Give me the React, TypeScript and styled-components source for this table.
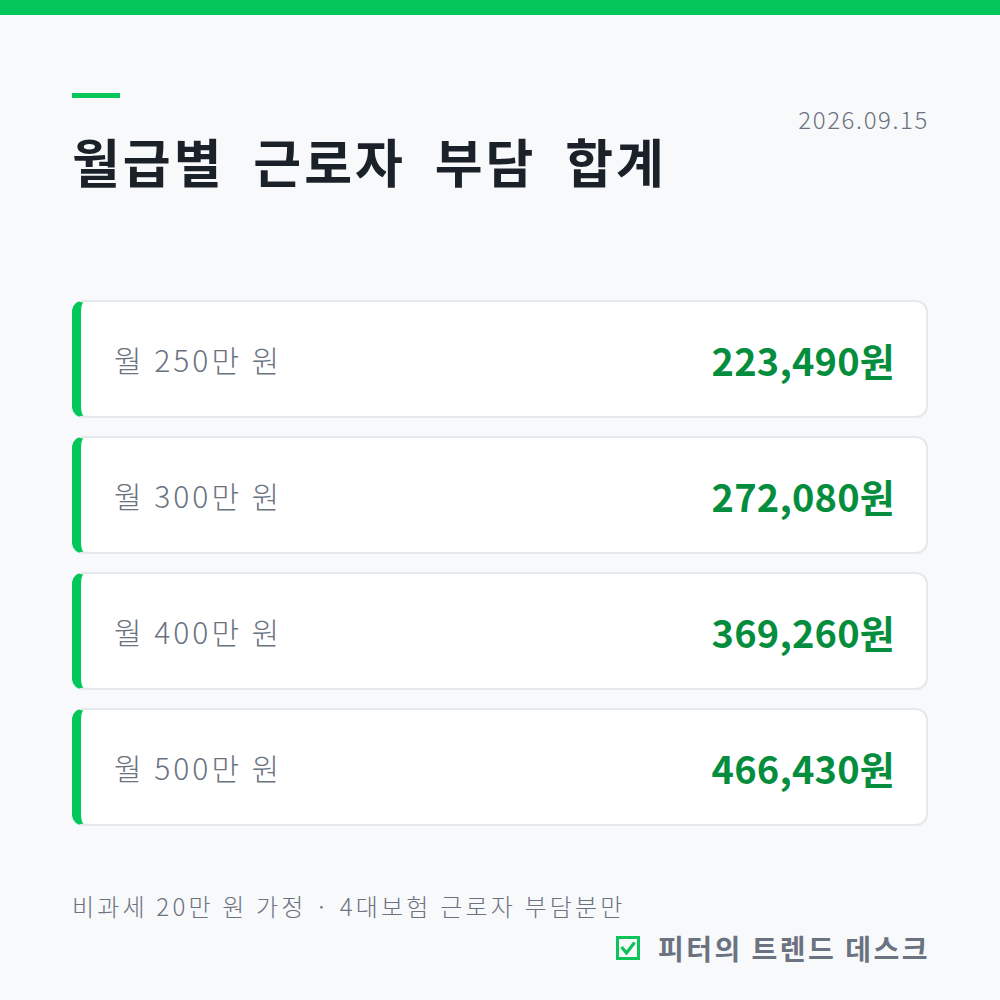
import styled, { createGlobalStyle } from "styled-components";

const GlobalStyle = createGlobalStyle`
  html, body {
    margin: 0;
    padding: 0;
    background: #f8f9fb;
  }
  body {
    font-family: "Noto Sans CJK KR", "Noto Sans", sans-serif;
  }
`;

type Row = {
  label: string;
  amount: string;
};

const rows: Row[] = [
  { label: "월 250만 원", amount: "223,490원" },
  { label: "월 300만 원", amount: "272,080원" },
  { label: "월 400만 원", amount: "369,260원" },
  { label: "월 500만 원", amount: "466,430원" },
];

function CheckIcon() {
  return (
    <svg width="24" height="24" viewBox="0 0 24 24">
      <rect x="1.5" y="1.5" width="21" height="21" fill="none" stroke="#0cc45a" strokeWidth="3" />
      <path d="M5.5 11 L10.5 17 L18.5 6.5" fill="none" stroke="#0cc45a" strokeWidth="3.2" />
    </svg>
  );
}

function App() {
  return (
    <S.Page>
      <GlobalStyle />
      <S.TopBar />
      <S.Content>
        <S.Header>
          <S.TitleBlock>
            <S.Accent />
            <S.Title>월급별 근로자 부담 합계</S.Title>
          </S.TitleBlock>
          <S.Date>2026.09.15</S.Date>
        </S.Header>

        <S.List>
          {rows.map((row) => (
            <S.Card key={row.label}>
              <S.Label>{row.label}</S.Label>
              <S.Amount>{row.amount}</S.Amount>
            </S.Card>
          ))}
        </S.List>

        <S.Footer>
          <S.Note>비과세 20만 원 가정 · 4대보험 근로자 부담분만</S.Note>
          <S.Brand>
            <CheckIcon />
            <span>피터의 트렌드 데스크</span>
          </S.Brand>
        </S.Footer>
      </S.Content>
    </S.Page>
  );
}

const S = {} as any;

S.Page = styled.div`
  width: 1000px;
  height: 1000px;
  background: #f8f9fb;
  display: flex;
  flex-direction: column;
  overflow: hidden;
`;

S.TopBar = styled.div`
  height: 15px;
  background: #03c75a;
  flex-shrink: 0;
`;

S.Content = styled.div`
  padding: 78px 72px 0;
  display: flex;
  flex-direction: column;
`;

S.Header = styled.header`
  display: flex;
  justify-content: space-between;
  align-items: flex-start;
`;

S.TitleBlock = styled.div`
  display: flex;
  flex-direction: column;
`;

S.Accent = styled.div`
  width: 48px;
  height: 5px;
  background: #03c75a;
  margin-bottom: 28px;
`;

S.Title = styled.h1`
  margin: 0;
  font-size: 52px;
  font-weight: 700;
  color: #1b2129;
  letter-spacing: 3px;
  word-spacing: 14px;
  line-height: 70px;
`;

S.Date = styled.div`
  font-size: 24px;
  font-weight: 300;
  color: #6b7280;
  letter-spacing: 1.6px;
  margin-top: 8px;
  margin-right: -1px;
`;

S.List = styled.div`
  display: flex;
  flex-direction: column;
  gap: 18px;
  margin-top: 104px;
`;

S.Card = styled.div`
  height: 118px;
  box-sizing: border-box;
  background: #ffffff;
  border: 2px solid #e5e8ec;
  border-left: 9px solid #03c75a;
  border-radius: 12px;
  display: flex;
  align-items: center;
  justify-content: space-between;
  padding: 0 31px 0 33px;
`;

S.Label = styled.div`
  font-size: 30px;
  font-weight: 300;
  color: #6b7280;
  letter-spacing: 3px;
`;

S.Amount = styled.div`
  font-size: 38px;
  font-weight: 700;
  color: #058d3e;
  letter-spacing: 0.2px;
`;

S.Footer = styled.footer`
  display: flex;
  flex-direction: column;
  margin-top: 62px;
`;

S.Note = styled.div`
  font-size: 24px;
  font-weight: 300;
  color: #6b7280;
  letter-spacing: 3.2px;
  line-height: 36px;
`;

S.Brand = styled.div`
  align-self: flex-end;
  display: flex;
  align-items: center;
  gap: 18px;
  margin-top: 4px;
  margin-right: -2px;
  font-size: 28px;
  font-weight: 700;
  color: #6b7280;
  letter-spacing: 2.5px;
`;

export default App;
